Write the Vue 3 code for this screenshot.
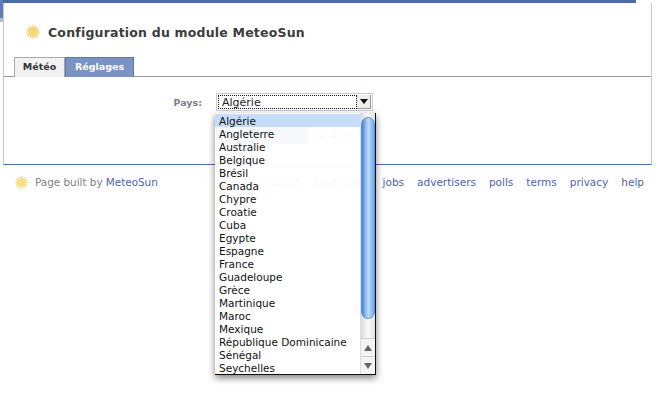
<script setup>
const countries = ['Algérie','Angleterre','Australie','Belgique','Brésil','Canada','Chypre','Croatie','Cuba','Egypte','Espagne','France','Guadeloupe','Grèce','Martinique','Maroc','Mexique','République Dominicaine','Sénégal','Seychelles']
const links = ['about','developers','jobs','advertisers','polls','terms','privacy','help']
const rays = [0,30,60,90,120,150,180,210,240,270,300,330]
</script>

<template>
  <div class="page">
    <div class="edge"><div class="edge-dark"></div><div class="edge-light"></div></div>
    <div class="main">
      <div class="topbar"></div>
      <section class="panel">
        <header class="head">
          <svg class="sun" viewBox="0 0 16 16" width="14" height="14">
            <g stroke="#e9c24e" stroke-width="1.2">
              <line v-for="r in rays" :key="r" x1="8" y1="0.3" x2="8" y2="3" :transform="`rotate(${r} 8 8)`" />
            </g>
            <circle cx="8" cy="8" r="5.6" fill="#f5d877" />
          </svg>
          <h1>Configuration du module MeteoSun</h1>
        </header>
        <nav class="tabs">
          <a class="tab">Météo</a>
          <a class="tab active">Réglages</a>
        </nav>
        <form class="form">
          <label>Pays:</label>
          <div class="select">
            <span class="value">Algérie</span>
            <span class="arrow"><i></i></span>
          </div>
        </form>
        <div class="actions">
          <span class="btn"></span>
          <span class="or">or Annuler</span>
        </div>
      </section>
      <footer class="foot">
        <svg class="sun small" viewBox="0 0 16 16" width="13" height="13">
          <g stroke="#eccb5e" stroke-width="1.2">
            <line v-for="r in rays" :key="r" x1="8" y1="0.3" x2="8" y2="3" :transform="`rotate(${r} 8 8)`" />
          </g>
          <circle cx="8" cy="8" r="5.6" fill="#f8df8a" />
        </svg>
        <span class="built">Page built by <a>MeteoSun</a></span>
        <span class="links"><a v-for="l in links" :key="l">{{ l }}</a></span>
      </footer>
    </div>
    <div class="menu">
      <ul>
        <li v-for="(c, i) in countries" :key="c" :class="{ sel: i === 0 }">{{ c }}</li>
      </ul>
      <div class="scroll">
        <div class="track">
          <div class="thumb"></div>
        </div>
        <div class="step"><i class="up"></i></div>
        <div class="step"><i class="down"></i></div>
      </div>
    </div>
  </div>
</template>

<style>
html, body { margin: 0; background: #fff; }
</style>

<style scoped>
.page {
  position: relative;
  display: flex;
  width: 671px;
  height: 410px;
  overflow: hidden;
  background: #fff;
  font-family: "DejaVu Sans", sans-serif;
  font-size: 10.5px;
}
.edge { width: 3px; flex: none; }
.edge-dark { height: 18px; background: #5f7fb8; }
.edge-light { height: 4px; background: #aebfdc; }
.main { width: 649px; flex: none; }
.topbar { width: 633px; height: 3px; background: #4b6aa6; }
.panel {
  box-sizing: border-box;
  height: 162px;
  border: 1px solid #c8c8c8;
  border-top: 0;
  border-bottom: 1px solid #4b6cb0;
}
.head { display: flex; align-items: center; height: 54px; padding: 4px 0 0 22px; box-sizing: border-box; }
.sun { flex: none; }
h1 {
  margin: 0 0 0 8px;
  font-size: 12.5px;
  font-weight: 700;
  color: #3c3c3c;
  letter-spacing: 0.2px;
}
.tabs {
  display: flex;
  height: 20px;
  box-sizing: border-box;
  padding-left: 10px;
  border-bottom: 1px solid #999;
}
.tab {
  box-sizing: border-box;
  height: 20px;
  line-height: 18px;
  text-align: center;
  font-size: 9.5px;
  font-weight: 700;
  color: #333;
  width: 51px;
  border: 1px solid #aaa;
  border-bottom: 0;
  background: #f2f2f2;
}
.tab.active {
  width: 69px;
  color: #fff;
  background: #7b93c0;
  border: 1px solid #5a76ae;
  border-bottom: 0;
}
.form { display: flex; align-items: center; margin-top: 16px; height: 18px; }
label { width: 198px; text-align: right; font-size: 9.5px; font-weight: 700; color: #808080; }
.select {
  box-sizing: border-box;
  display: flex;
  align-items: center;
  margin-left: 14px;
  width: 157px;
  height: 18px;
  padding: 1px;
  border: 1px solid #c5cbd8;
  background: #fff;
}
.value {
  flex: 1;
  box-sizing: border-box;
  height: 14px;
  line-height: 13px;
  padding-left: 3px;
  border: 1px dotted #111;
  color: #222;
  font-size: 11px;
}
.arrow {
  width: 14px;
  height: 14px;
  display: flex;
  align-items: center;
  justify-content: center;
  background: #eee;
  border-right: 1px solid #999;
  border-bottom: 1px solid #999;
  box-sizing: border-box;
}
.arrow i {
  border-left: 4px solid transparent;
  border-right: 4px solid transparent;
  border-top: 5px solid #111;
}
.actions { display: flex; align-items: center; margin: 15px 0 0 212px; height: 18px; }
.btn {
  width: 92px;
  height: 18px;
  background: #5f7fb8;
}
.or { margin-left: 8px; color: #555; font-size: 10.5px; }
.foot { position: relative; display: flex; align-items: center; height: 34px; padding: 0 8px 0 12px; box-sizing: border-box; color: #808080; }
.built { margin-left: 7px; font-size: 10.4px; }
.built a { color: #4a66a8; }
.links { margin-left: auto; display: flex; gap: 13px; font-size: 10.5px; }
.links a { color: #4a66a8; }
.menu {
  position: absolute;
  left: 215px;
  top: 113px;
  width: 161px;
  height: 262px;
  box-sizing: border-box;
  display: flex;
  background: rgba(255, 255, 255, .95);
  border-right: 1px solid #111;
  border-bottom: 1px solid #111;
  box-shadow: 0 3px 7px rgba(0, 0, 0, .5);
}
.menu ul { flex: 1; list-style: none; margin: 1px 0 0; padding: 0; overflow: hidden; }
.menu li {
  height: 12px;
  padding-top: 1px;
  line-height: 13px;
  padding-left: 4px;
  color: #111;
  font-size: 10.5px;
  white-space: nowrap;
}
.menu li.sel { background: #c5dcfa; }
.scroll { width: 15px; flex: none; display: flex; flex-direction: column; background: #f4f4f4; border-left: 1px solid #ddd; box-sizing: border-box; }
.track { flex: 1; padding-top: 4px; background: linear-gradient(90deg, #ddd, #fafafa 50%, #e4e4e4); }
.thumb {
  height: 202px;
  border-radius: 7px;
  background: linear-gradient(90deg, #3f7fd8, #9cc6f2 35%, #bcdcf8 55%, #6ea9ea);
  border: 1px solid #5f93d8;
  box-sizing: border-box;
}
.step { height: 17px; display: flex; align-items: center; justify-content: center; border-top: 1px solid #ccc; background: #f4f4f4; }
.up { border-left: 4px solid transparent; border-right: 4px solid transparent; border-bottom: 6px solid #666; }
.down { border-left: 4px solid transparent; border-right: 4px solid transparent; border-top: 6px solid #666; }
</style>
